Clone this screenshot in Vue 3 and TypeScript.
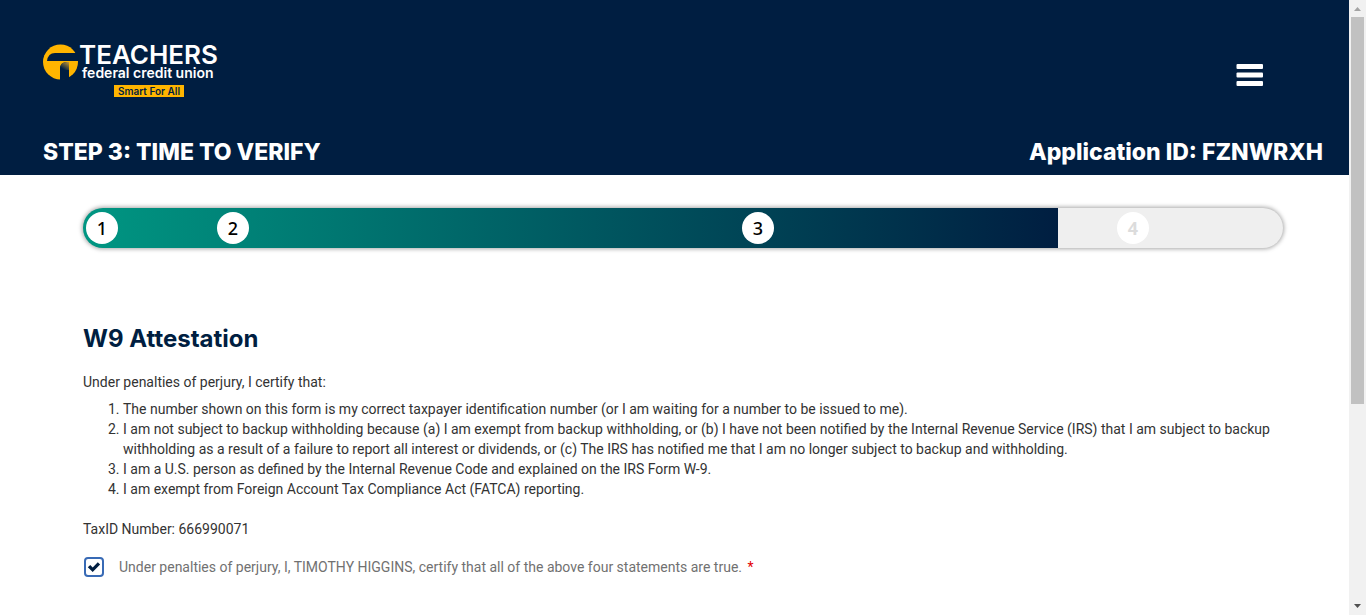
<script setup lang="ts">
import { ref } from 'vue'

interface Step {
  label: string
  done: boolean
}

const steps: Step[] = [
  { label: '1', done: true },
  { label: '2', done: true },
  { label: '3', done: true },
  { label: '4', done: false },
]

const statements: string[] = [
  'The number shown on this form is my correct taxpayer identification number (or I am waiting for a number to be issued to me).',
  'I am not subject to backup withholding because (a) I am exempt from backup withholding, or (b) I have not been notified by the Internal Revenue Service (IRS) that I am subject to backup withholding as a result of a failure to report all interest or dividends, or (c) The IRS has notified me that I am no longer subject to backup and withholding.',
  'I am a U.S. person as defined by the Internal Revenue Code and explained on the IRS Form W-9.',
  'I am exempt from Foreign Account Tax Compliance Act (FATCA) reporting.',
]

const certified = ref(true)
</script>

<template>
  <div class="page">
    <div class="content">
      <header class="header">
        <div class="brand-row">
          <svg class="logo" viewBox="0 0 178 56" role="img" aria-label="Teachers federal credit union, Smart For All">
            <defs>
              <linearGradient id="stem" x1="1" y1="0" x2="0.3" y2="1">
                <stop offset="0" stop-color="#c99a35" />
                <stop offset="0.9" stop-color="#001e41" />
              </linearGradient>
            </defs>
            <circle cx="17.5" cy="18" r="17.5" fill="#ffb500" />
            <path d="M4 17Q5 9 12 9H34.5Q36.5 13 35.5 17Z" fill="#001e41" />
            <path d="M17 36V25Q17 18 24 18H26V34.5Q22 36.5 17 36Z" fill="#001e41" />
            <path d="M17 26V25Q17 18 24 18H26V26Z" fill="url(#stem)" />
            <text class="logo-name" x="36" y="20">TEACHERS</text>
            <text class="logo-sub" x="39" y="34">federal credit union</text>
            <rect x="71" y="41" width="70" height="12" fill="#ffb500" />
            <text class="logo-tag" x="106" y="51" text-anchor="middle">Smart For All</text>
          </svg>
          <button class="menu" type="button" aria-label="Menu">
            <svg viewBox="0 0 28 24" aria-hidden="true">
              <rect x="0.5" y="1" width="26.5" height="5" rx="1" />
              <rect x="0.5" y="9.5" width="26.5" height="5" rx="1" />
              <rect x="0.5" y="18" width="26.5" height="5" rx="1" />
            </svg>
          </button>
        </div>
        <div class="title-row">
          <h1>STEP 3: TIME TO VERIFY</h1>
          <p class="app-id">Application ID: FZNWRXH</p>
        </div>
      </header>

      <main class="main">
        <ol class="progress" aria-label="Application progress">
          <li v-for="step in steps" :key="step.label">
            <span class="step" :class="{ pending: !step.done }">{{ step.label }}</span>
          </li>
        </ol>

        <h2>W9 Attestation</h2>
        <p class="intro">Under penalties of perjury, I certify that:</p>
        <ol class="statements">
          <li v-for="statement in statements" :key="statement">{{ statement }}</li>
        </ol>
        <p class="tax">TaxID Number: 666990071</p>
        <div class="certify">
          <span class="box">
            <input id="certify" v-model="certified" type="checkbox" required />
            <svg v-if="certified" viewBox="0 0 14 12" aria-hidden="true">
              <path d="M0.8 6.2L3.2 3.9L5.7 6.4L10.8 1.2L13.1 3.5L5.7 10.9Z" />
            </svg>
          </span>
          <label for="certify">Under penalties of perjury, I, TIMOTHY HIGGINS, certify that all of the above four statements are true. <span class="required">*</span></label>
        </div>
      </main>
    </div>

    <div class="scrollbar" aria-hidden="true">
      <svg class="arrow" viewBox="0 0 17 17"><path d="M5 11L8.5 7L12 11Z" fill="#a3a3a3" /></svg>
      <div class="track"><div class="thumb"></div></div>
      <svg class="arrow" viewBox="0 0 17 17"><path d="M5 6L8.5 10L12 6Z" fill="#505050" /></svg>
    </div>
  </div>
</template>

<style>
body {
  margin: 0;
  background: #fff;
}
</style>

<style scoped>
.page {
  display: flex;
  align-items: flex-start;
  min-height: 100vh;
  font-family: Roboto, sans-serif;
  font-size: 14px;
  line-height: 20px;
  color: #333;
}

.content {
  flex: 1;
  min-width: 0;
}

.header {
  padding: 44px 26px 8px 43px;
  background: #001e41;
  color: #fff;
}

.brand-row,
.title-row {
  display: flex;
  justify-content: space-between;
}

.logo {
  width: 178px;
  height: 56px;
  overflow: visible;
  font-family: Inter, sans-serif;
}

.logo-name {
  font-size: 26px;
  font-weight: 600;
  fill: #fff;
}

.logo-sub {
  font-size: 14px;
  font-weight: 600;
  fill: #fff;
}

.logo-tag {
  font-size: 10px;
  font-weight: 600;
  fill: #001e41;
}

.menu {
  align-self: flex-start;
  width: 28px;
  height: 24px;
  margin: 19px 59px 0 0;
  padding: 0;
  border: 0;
  background: none;
  cursor: pointer;
}

.menu svg {
  display: block;
  width: 28px;
  height: 24px;
  fill: #fff;
}

.title-row {
  margin-top: 37px;
}

h1,
.app-id {
  margin: 0;
  font-family: Inter, sans-serif;
  font-size: 23px;
  font-weight: 800;
  line-height: 30px;
}

.main {
  padding: 33px 66px 36px 83px;
}

.progress {
  display: grid;
  grid-template-columns: 131fr 525fr 375fr 166fr;
  align-items: center;
  height: 40px;
  margin: 0;
  padding: 0 0 0 3px;
  border-radius: 20px;
  list-style: none;
  background: linear-gradient(to right, #009682, #001e41) 0 0 / 81.25% 100% no-repeat #efefef;
  box-shadow: 0 0 4px 1px rgba(0, 0, 0, 0.35);
}

.step {
  display: block;
  width: 32px;
  height: 32px;
  border-radius: 50%;
  background: #fff;
  color: #000;
  font-family: "Noto Sans", sans-serif;
  font-size: 18px;
  font-weight: 500;
  line-height: 32px;
  text-align: center;
}

.step.pending {
  color: #dcdcdc;
  font-weight: 700;
}

h2 {
  margin: 76px 0 18px;
  color: #001e41;
  font-family: Inter, sans-serif;
  font-size: 24px;
  font-weight: 700;
  line-height: 30px;
}

.intro,
.tax {
  margin: 0;
}

.statements {
  margin: 7px 0 20px;
  padding-left: 40px;
}

.certify {
  display: flex;
  align-items: center;
  gap: 15px;
  margin-top: 18px;
  padding-left: 1px;
  color: #717171;
}

.box {
  display: grid;
  place-items: center;
  width: 20px;
  height: 20px;
}

.box > * {
  grid-area: 1 / 1;
}

.box input {
  appearance: none;
  box-sizing: border-box;
  width: 20px;
  height: 20px;
  margin: 0;
  border: 2px solid #386ab5;
  border-radius: 4px;
  background: #fff;
}

.box svg {
  width: 14px;
  height: 12px;
  fill: #001e41;
  pointer-events: none;
}

.required {
  margin-left: 2px;
  color: #e30000;
}

.scrollbar {
  position: sticky;
  top: 0;
  display: flex;
  flex-direction: column;
  width: 17px;
  height: 100vh;
  background: #f1f1f1;
}

.arrow {
  flex: none;
  width: 17px;
  height: 17px;
}

.track {
  flex: 1;
  padding: 0 2px;
}

.thumb {
  height: 66.6%;
  background: #c1c1c1;
}
</style>
